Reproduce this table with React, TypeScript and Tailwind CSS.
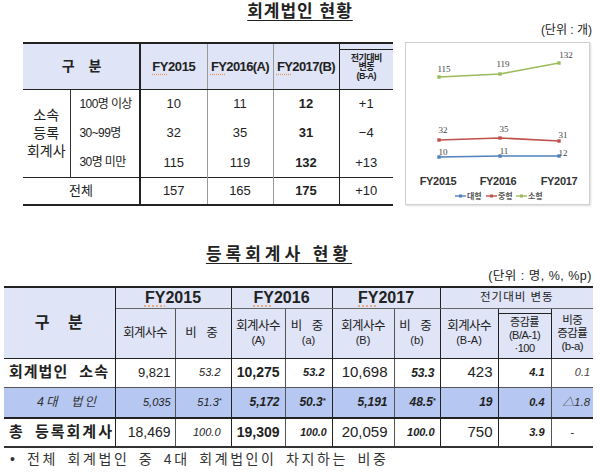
import React from "react";

// 회계법인 / 등록회계사 현황 (two tables + small trend chart)

const headBg = "bg-[#dfe4f6]";

function FY({ rest }: { rest: string }) {
  return (
    <span>
      <span className="underline decoration-dotted decoration-[#e8945a] underline-offset-[3px]">FY</span>
      {rest}
    </span>
  );
}

function TrendChart() {
  const xs = [33, 94, 153];
  const series = [
    { color: "#9bbb59", ys: [34, 31, 20], vals: ["115", "119", "132"], lx: [38, 97, 160], ly: [29, 24, 15] },
    { color: "#c0504d", ys: [97, 95, 98], vals: ["32", "35", "31"], lx: [37, 98, 157], ly: [90, 89, 95] },
    { color: "#4f81bd", ys: [114, 113, 113], vals: ["10", "11", "12"], lx: [37, 98, 157], ly: [112, 111, 113] },
  ];

  return (
    <div className="ml-[12px] w-[185px] h-[163px] border border-[#cfcfcf] shadow-[1px_1px_2px_rgba(0,0,0,0.15)] bg-white">
      <svg width="183" height="161" viewBox="0 0 183 161">
        {series.map((s) => (
          <g key={s.color}>
            <polyline
              points={xs.map((x, i) => `${x},${s.ys[i]}`).join(" ")}
              fill="none"
              stroke={s.color}
              strokeWidth="1.6"
            />
            {xs.map((x, i) => (
              <rect key={i} x={x - 1.7} y={s.ys[i] - 1.7} width="3.4" height="3.4" fill={s.color} />
            ))}
            {s.vals.map((v, i) => (
              <text
                key={v}
                x={s.lx[i]}
                y={s.ly[i]}
                textAnchor="middle"
                fontSize="9"
                fill="#444"
                fontFamily="'Liberation Serif', serif"
              >
                {v}
              </text>
            ))}
          </g>
        ))}
        {["FY2015", "FY2016", "FY2017"].map((t, i) => (
          <text
            key={t}
            x={[32, 92, 153][i]}
            y={142}
            textAnchor="middle"
            fontSize="11"
            fontWeight="bold"
            fill="#333"
            fontFamily="'Liberation Sans', sans-serif"
            letterSpacing="-0.3"
          >
            {t}
          </text>
        ))}
        {[
          { c: "#4f81bd", x: 49, t: "대형" },
          { c: "#c0504d", x: 80, t: "중형" },
          { c: "#9bbb59", x: 110, t: "소형" },
        ].map((l) => (
          <g key={l.t}>
            <line x1={l.x} y1={153} x2={l.x + 11} y2={153} stroke={l.c} strokeWidth="1.4" />
            <rect x={l.x + 4} y={151.5} width="3" height="3" fill={l.c} />
            <text x={l.x + 12} y={156} fontSize="8" fontWeight="bold" fill="#555" fontFamily="'Noto Sans CJK KR', sans-serif">
              {l.t}
            </text>
          </g>
        ))}
      </svg>
    </div>
  );
}

function FirmTable() {
  const rows = [
    { label: "100명 이상", v: ["10", "11", "12", "+1"] },
    { label: "30~99명", v: ["32", "35", "31", "−4"] },
    { label: "30명 미만", v: ["115", "119", "132", "+13"] },
  ];

  return (
    <table className="ml-[23px] w-[370px] table-fixed border-collapse text-[13px] text-[#222]">
      <colgroup>
        <col className="w-[47px]" />
        <col className="w-[70px]" />
        <col className="w-[67px]" />
        <col className="w-[66px]" />
        <col className="w-[66px]" />
        <col className="w-[54px]" />
      </colgroup>
      <thead>
        <tr className={`h-[46px] ${headBg}`}>
          <th colSpan={2} className="border-t-2 border-b border-r-2 border-[#222] text-[14px] font-bold tracking-[5px] pl-[6px]">
            구 분
          </th>
          <th className="border-t-2 border-b border-r border-t-[#222] border-b-[#222] border-r-[#999] font-bold tracking-[-0.4px]">
            <FY rest="2015" />
          </th>
          <th className="border-t-2 border-b border-r border-t-[#222] border-b-[#222] border-r-[#999] font-bold tracking-[-0.6px]">
            <FY rest="2016(A)" />
          </th>
          <th className="border-t-2 border-b border-r border-t-[#222] border-b-[#222] border-r-[#222] font-bold tracking-[-0.6px]">
            <FY rest="2017(B)" />
          </th>
          <th className="border-t-2 border-b border-[#222] p-0 align-top">
            <div className="mt-[5px] border-t border-[#222] pt-[4px] text-[9px] leading-[9px] font-bold tracking-[-0.5px]">
              <div>전기대비</div>
              <div>변동</div>
              <div>(B-A)</div>
            </div>
          </th>
        </tr>
      </thead>
      <tbody>
        {rows.map((r, i) => (
          <tr key={r.label} className={i === 1 ? "h-[30px]" : "h-[29px]"}>
            {i === 0 && (
              <td rowSpan={3} className="border-r border-[#333] text-center text-[14px] leading-[18px]">
                소속
                <br />
                등록
                <br />
                회계사
              </td>
            )}
            <td className="border-r-2 border-[#222] pl-[9px] text-[12px] tracking-[-0.6px] whitespace-nowrap">{r.label}</td>
            <td className="border-r border-[#999] text-center">{r.v[0]}</td>
            <td className="border-r border-[#999] text-center">{r.v[1]}</td>
            <td className="border-r border-[#222] text-center font-bold">{r.v[2]}</td>
            <td className="text-center">{r.v[3]}</td>
          </tr>
        ))}
        <tr className="h-[28px]">
          <td colSpan={2} className="border-t border-b-2 border-r-2 border-[#222] text-center">
            전체
          </td>
          <td className="border-t border-b-2 border-r border-t-[#222] border-b-[#222] border-r-[#999] text-center">157</td>
          <td className="border-t border-b-2 border-r border-t-[#222] border-b-[#222] border-r-[#999] text-center">165</td>
          <td className="border-t border-b-2 border-r border-[#222] text-center font-bold">175</td>
          <td className="border-t border-b-2 border-[#222] text-center">+10</td>
        </tr>
      </tbody>
    </table>
  );
}

function CpaTable() {
  const sub = "border-r border-[#555]";
  const grp = "border-r border-[#222]";

  return (
    <table className="ml-[4px] w-[589px] table-fixed border-collapse text-[#222]">
      <colgroup>
        <col className="w-[111px]" />
        <col className="w-[60px]" />
        <col className="w-[56px]" />
        <col className="w-[54px]" />
        <col className="w-[47px]" />
        <col className="w-[62px]" />
        <col className="w-[46px]" />
        <col className="w-[58px]" />
        <col className="w-[53px]" />
        <col className="w-[42px]" />
      </colgroup>
      <thead className={headBg}>
        <tr className="h-[21px]">
          <th rowSpan={2} className="border-t-2 border-b border-r border-[#222] text-[16px] font-bold tracking-[7px] pl-[6px]">
            구 분
          </th>
          <th colSpan={2} className="border-t-2 border-b border-r border-t-[#222] border-b-[#666] border-r-[#222] text-[16px] font-bold leading-[18px]">
            <FY rest="2015" />
          </th>
          <th colSpan={2} className="border-t-2 border-b border-r border-t-[#222] border-b-[#666] border-r-[#222] text-[16px] font-bold leading-[18px]">
            <FY rest="2016" />
          </th>
          <th colSpan={2} className="border-t-2 border-b border-r border-t-[#222] border-b-[#666] border-r-[#222] text-[16px] font-bold leading-[18px]">
            <FY rest="2017" />
          </th>
          <th colSpan={3} className="border-t-2 border-b border-t-[#222] border-b-[#666] text-[11.5px] font-normal tracking-[1px]">
            전기대비 변동
          </th>
        </tr>
        <tr className="h-[46px] text-[12.5px] leading-[14px] font-normal">
          <th className={`${sub} border-b border-b-[#222] font-normal tracking-[-0.6px]`}>회계사수</th>
          <th className={`${grp} border-b border-b-[#222] font-normal tracking-[3px]`}>비 중</th>
          <th className={`${sub} border-b border-b-[#222] font-normal tracking-[-0.6px]`}>
            회계사수
            <div className="text-[11px]">(A)</div>
          </th>
          <th className={`${grp} border-b border-b-[#222] font-normal tracking-[3px]`}>
            비 중<div className="text-[11px] tracking-normal">(a)</div>
          </th>
          <th className={`${sub} border-b border-b-[#222] font-normal tracking-[-0.6px]`}>
            회계사수
            <div className="text-[11px] tracking-normal">(B)</div>
          </th>
          <th className={`${grp} border-b border-b-[#222] font-normal tracking-[3px]`}>
            비 중<div className="text-[11px] tracking-normal">(b)</div>
          </th>
          <th className={`${grp} border-b border-b-[#222] font-normal tracking-[-0.6px]`}>
            회계사수
            <div className="text-[11px] tracking-normal">(B-A)</div>
          </th>
          <th className={`${grp} border-b border-b-[#222] p-0 align-bottom font-normal`}>
            <div className="mt-[4px] border-t border-[#222] pt-[2px] pb-[3px] text-[11px] leading-[13px] tracking-[-0.5px]">
              <div>증감률</div>
              <div>(B/A-1)</div>
              <div>·100</div>
            </div>
          </th>
          <th className="border-b border-b-[#222] font-normal text-[11.5px] leading-[13px] tracking-[-0.5px]">
            <div>비중</div>
            <div>증감률</div>
            <div>(b-a)</div>
          </th>
        </tr>
      </thead>
      <tbody>
        <tr className="h-[29px] border-b border-[#555]">
          <td className={`${grp} pl-[5px] text-[15px] font-bold tracking-[1px] [word-spacing:6px] whitespace-nowrap`}>회계법인 소속</td>
          <td className={`${sub} pr-[4px] text-right text-[13px]`}>9,821</td>
          <td className={`${grp} pr-[10px] text-right text-[11px] italic`}>53.2</td>
          <td className={`${sub} pr-[5px] text-right text-[14px] font-bold`}>10,275</td>
          <td className={`${grp} pr-[7px] text-right text-[11px] italic font-bold`}>53.2</td>
          <td className={`${sub} pr-[6px] text-right text-[15px]`}>10,698</td>
          <td className={`${grp} pr-[5px] text-right text-[12px] italic font-bold`}>53.3</td>
          <td className={`${grp} pr-[5px] text-right text-[15px]`}>423</td>
          <td className={`${sub} pr-[6px] text-right text-[11px] italic font-bold`}>4.1</td>
          <td className="pr-[3px] text-right text-[11px] italic text-[#444]">0.1</td>
        </tr>
        <tr className="h-[31px] bg-[#b6c8f1] border-b-2 border-[#222]">
          <td className={`${grp} pl-[33px] text-[12.5px] italic tracking-[2px] [word-spacing:6px] text-[#333]`}>4대 법인</td>
          <td className={`${sub} pr-[4px] text-right text-[11px] italic`}>5,035</td>
          <td className={`${grp} pr-[9px] text-right text-[11px] italic`}>
            51.3<sup className="text-[7px]">*</sup>
          </td>
          <td className={`${sub} pr-[5px] text-right text-[12px] italic font-bold`}>5,172</td>
          <td className={`${grp} pr-[6px] text-right text-[12px] italic font-bold`}>
            50.3<sup className="text-[7px]">*</sup>
          </td>
          <td className={`${sub} pr-[6px] text-right text-[12px] italic font-bold`}>5,191</td>
          <td className={`${grp} pr-[4px] text-right text-[12px] italic font-bold`}>
            48.5<sup className="text-[7px]">*</sup>
          </td>
          <td className={`${grp} pr-[5px] text-right text-[12px] italic font-bold`}>19</td>
          <td className={`${sub} pr-[6px] text-right text-[11px] italic font-bold`}>0.4</td>
          <td className="pr-[3px] text-right text-[11.5px] italic text-[#333]">△1.8</td>
        </tr>
        <tr className="h-[29px] border-b-2 border-[#333]">
          <td className={`${grp} pl-[5px] text-[15px] font-bold tracking-[2px] [word-spacing:4px] whitespace-nowrap`}>총 등록회계사</td>
          <td className={`${sub} pr-[4px] text-right text-[14px]`}>18,469</td>
          <td className={`${grp} pr-[10px] text-right text-[11px] italic`}>100.0</td>
          <td className={`${sub} pr-[5px] text-right text-[14px] font-bold`}>19,309</td>
          <td className={`${grp} pr-[5px] text-right text-[10.5px] italic font-bold`}>100.0</td>
          <td className={`${sub} pr-[6px] text-right text-[15px]`}>20,059</td>
          <td className={`${grp} pr-[5px] text-right text-[11px] italic font-bold`}>100.0</td>
          <td className={`${grp} pr-[5px] text-right text-[15px]`}>750</td>
          <td className={`${sub} pr-[6px] text-right text-[11px] italic font-bold`}>3.9</td>
          <td className="text-center text-[11px]">-</td>
        </tr>
      </tbody>
    </table>
  );
}

export default function App() {
  return (
    <div className="w-[600px] h-[476px] overflow-hidden bg-white text-[#222] font-['Liberation_Sans','Noto_Sans_CJK_KR',sans-serif]">
      {/* 회계법인 현황 */}
      <div className="flex h-[42px] flex-col pt-[2px]">
        <h2 className="text-center text-[17px] font-bold leading-[20px] tracking-[1px]">
          <span className="underline underline-offset-[3px] decoration-[1px]">회계법인 현황</span>
        </h2>
        <div className="mt-[1px] flex justify-end pr-[8px] text-[12px] leading-[14px]">(단위 : 개)</div>
      </div>
      <div className="flex items-start">
        <FirmTable />
        <TrendChart />
      </div>

      {/* 등록회계사 현황 */}
      <div className="mt-[39px] flex flex-col">
        <h2 className="pr-[42px] text-center text-[17px] font-bold leading-[20px] tracking-[4px]">
          <span className="underline underline-offset-[3px] decoration-[1px]">등록회계사 현황</span>
        </h2>
        <div className="mt-[4px] flex justify-end pr-[8px] text-[12.5px] leading-[14px] tracking-[0.5px]">
          (단위 : 명, %, %p)
        </div>
      </div>
      <div className="mt-[3px]">
        <CpaTable />
      </div>
      <p className="mt-[3px] pl-[10px] text-[14px] leading-[17px] tracking-[2.6px] [word-spacing:3px] text-[#333]">
        • 전체 회계법인 중 4대 회계법인이 차지하는 비중
      </p>
    </div>
  );
}
